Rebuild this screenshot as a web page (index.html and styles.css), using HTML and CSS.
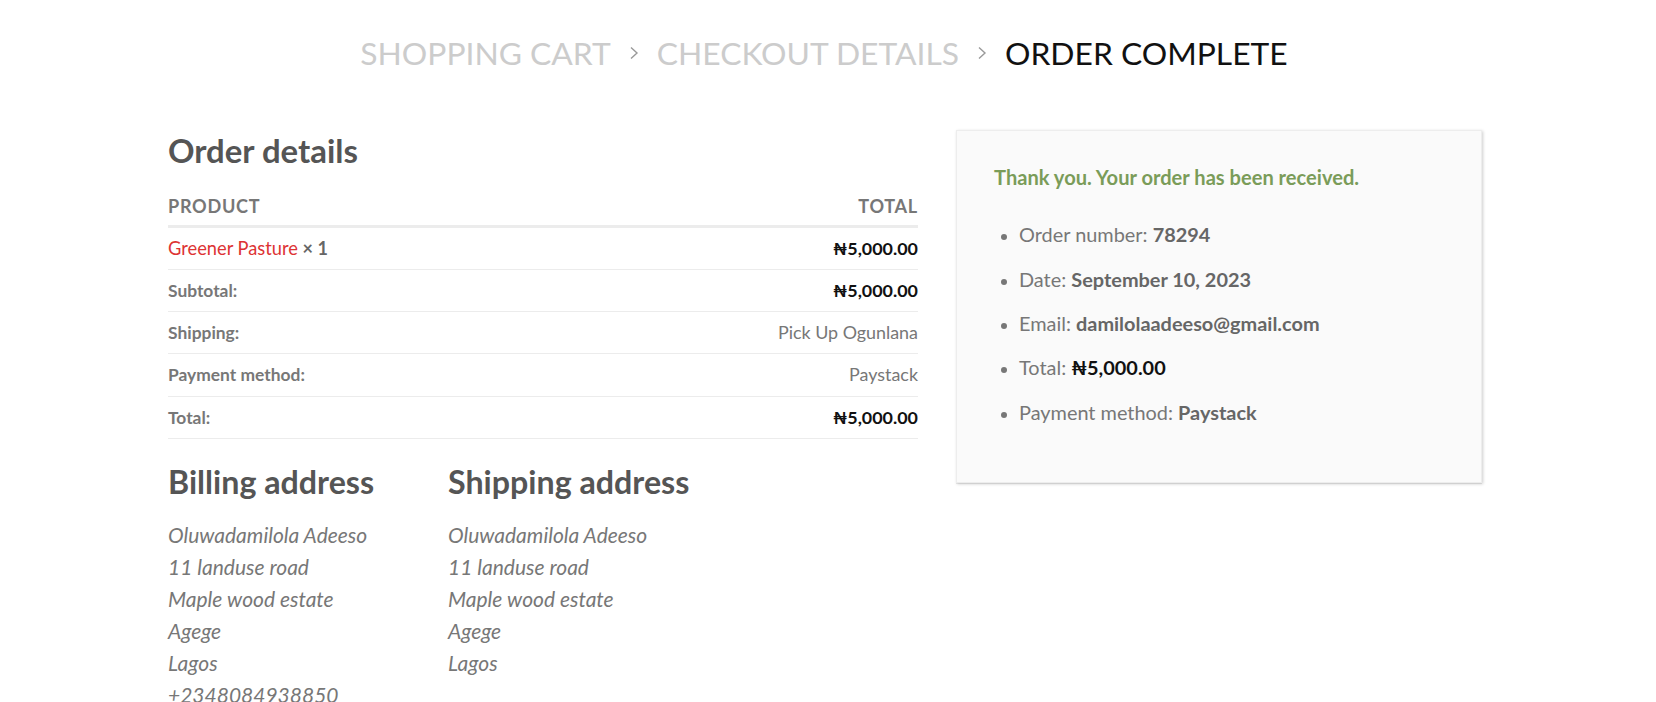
FILE: index.html
```html
<!DOCTYPE html>
<html lang="en">
<head>
<meta charset="utf-8">
<title>Order complete</title>
<link rel="stylesheet" href="styles.css">
</head>
<body>
<nav class="crumbs">
  <span class="crumb">Shopping Cart</span>
  <span class="divider"><svg width="10" height="14" viewBox="0 0 10 14"><polyline points="2,1.5 8,7 2,12.5" fill="none" stroke="#9a9a9a" stroke-width="1.4"/></svg></span>
  <span class="crumb">Checkout details</span>
  <span class="divider"><svg width="10" height="14" viewBox="0 0 10 14"><polyline points="2,1.5 8,7 2,12.5" fill="none" stroke="#9a9a9a" stroke-width="1.4"/></svg></span>
  <span class="crumb current">Order Complete</span>
</nav>

<main class="page">
  <section class="details">
    <h2 class="title main-title">Order details</h2>
    <table class="order-table">
      <thead>
        <tr><th class="left">Product</th><th class="right">Total</th></tr>
      </thead>
      <tbody>
        <tr><td class="left"><a class="prod" href="#">Greener Pasture</a> <strong class="qty">×&nbsp;1</strong></td><td class="right amount">₦5,000.00</td></tr>
        <tr><th class="left label">Subtotal:</th><td class="right amount">₦5,000.00</td></tr>
        <tr><th class="left label">Shipping:</th><td class="right plain">Pick Up Ogunlana</td></tr>
        <tr><th class="left label">Payment method:</th><td class="right plain">Paystack</td></tr>
        <tr><th class="left label">Total:</th><td class="right amount">₦5,000.00</td></tr>
      </tbody>
    </table>

    <div class="addresses">
      <div class="addr billing">
        <h2 class="title">Billing address</h2>
        <address>Oluwadamilola Adeeso<br>11 landuse road<br>Maple wood estate<br>Agege<br>Lagos<br>+2348084938850</address>
      </div>
      <div class="addr">
        <h2 class="title">Shipping address</h2>
        <address>Oluwadamilola Adeeso<br>11 landuse road<br>Maple wood estate<br>Agege<br>Lagos</address>
      </div>
    </div>
  </section>

  <aside class="well">
    <p class="thanks">Thank you. Your order has been received.</p>
    <ul class="overview">
      <li>Order number: <strong>78294</strong></li>
      <li>Date: <strong>September 10, 2023</strong></li>
      <li>Email: <strong>damilolaadeeso@gmail.com</strong></li>
      <li>Total: <strong class="black">₦5,000.00</strong></li>
      <li>Payment method: <strong>Paystack</strong></li>
    </ul>
  </aside>
</main>
</body>
</html>
```

FILE: styles.css
```css
* { box-sizing: border-box; }
html, body { margin: 0; padding: 0; background: #fff; }
body {
  font-family: Lato, "Open Sans", "Liberation Sans", sans-serif;
  color: #777;
  font-size: 19.2px;
}

.crumbs {
  display: flex;
  justify-content: center;
  align-items: center;
  padding-top: 34px;
  padding-right: 8px;
  font-size: 31.8px;
  line-height: 1.2;
  text-transform: uppercase;
}
.crumb { color: #ccc; }
.crumb.current { color: #111; }
.divider {
  display: flex;
  align-items: center;
  margin: 0 18px;
}

.page {
  display: flex;
  gap: 38px;
  padding-left: 168px;
  margin-top: 59px;
}
.details { width: 750px; flex: none; }
.title {
  margin: 0;
  font-size: 32.2px;
  line-height: 1.2;
  font-weight: 700;
  color: #555;
}
.main-title { font-size: 32.9px; margin-top: 0; margin-bottom: 1px; }

.order-table {
  width: 100%;
  border-collapse: collapse;
}
.order-table th, .order-table td {
  padding: 8px 0;
  line-height: 25.2px;
  border-bottom: 1px solid #ececec;
}
.order-table thead th {
  font-size: 18.1px;
  font-weight: 700;
  text-transform: uppercase;
  letter-spacing: 0.04em;
  color: #777;
  padding: 22px 0 6px;
  border-bottom: 3px solid #ececec;
}
.left { text-align: left; }
.right { text-align: right; }
.order-table td { font-size: 17.9px; }
.label { font-size: 17.4px; font-weight: 700; color: #777; }
.prod { color: #dd3333; text-decoration: none; font-size: 18.3px; }
.qty { color: #666; font-weight: 700; font-size: 18px; }
.amount { color: #111; font-weight: 700; }
.plain { color: #777; }

.addresses {
  display: flex;
  margin-top: 24px;
}
.addr.billing { width: 280px; flex: none; }
.addr address {
  font-style: italic;
  font-size: 21px;
  line-height: 32px;
  color: #777;
  margin-top: 17px;
}

.well {
  width: 526px;
  height: 353px;
  flex: none;
  background: #fafafa;
  box-shadow: 1px 1px 3px 0 rgba(0,0,0,.2), 0 1px 0 0 rgba(0,0,0,.07), inset 0 0 0 1px rgba(0,0,0,.05);
  padding: 30px 38px;
  margin-top: -1px;
}
.thanks {
  margin: 0;
  padding-top: 2px;
  color: #7a9c59;
  font-weight: 700;
  font-size: 20.1px;
  line-height: 1.5;
}
.overview {
  margin: 28px 0 0;
  padding-left: 25px;
  font-size: 19.9px;
  line-height: 1.5;
  color: #777;
}
.overview li { margin-bottom: 14.5px; }
.overview li::marker { color: #777; font-size: 17px; }
.overview strong { font-weight: 700; color: #666; }
.overview strong.black { color: #111; }
```
